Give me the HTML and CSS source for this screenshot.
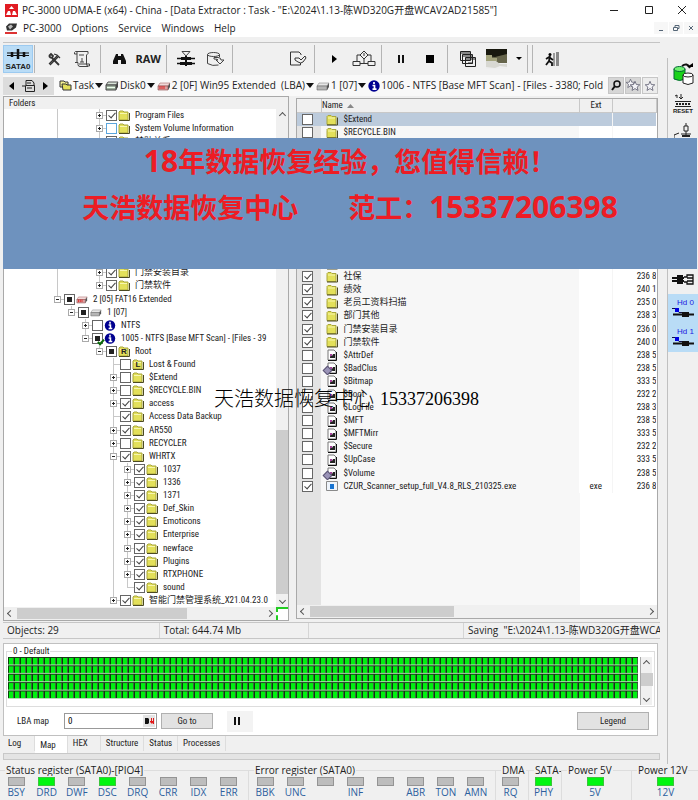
FILE: index.html
```html
<!DOCTYPE html>
<html lang="zh-CN">
<head>
<meta charset="utf-8">
<title>PC-3000 UDMA-E</title>
<link rel="stylesheet" href="styles.css">
</head>
<body>
<svg class="defs" aria-hidden="true">
  <symbol id="folder" viewBox="0 0 12 11"><path d="M1 3V2l1-1h3l1 1h4v8H1z" fill="#e3e05a" stroke="#a9a63c"/><path d="M2 3.5h7" stroke="#f7f6b0"/><path d="M1 10.5h10.500V3" fill="none" stroke="#4c4a22"/></symbol>
  <symbol id="drive" viewBox="0 0 14 10"><path d="M3 2h10l-2 3H1z" fill="#e6e6e6" stroke="#888" stroke-width=".6"/><path d="M1 5h10v4H1z" fill="#b5b5b5" stroke="#666" stroke-width=".6"/><path d="M11 5l2-3v4l-2 3z" fill="#555"/></symbol>
  <symbol id="reddrive" viewBox="0 0 14 10"><path d="M3 2h10l-2 3H1z" fill="#f0dada" stroke="#a66" stroke-width=".6"/><path d="M1 5h10v4H1z" fill="#d9a0a0" stroke="#844" stroke-width=".6"/><path d="M3 5v3M5 5v3M7 5v3" stroke="#d22"/><path d="M11 5l2-3v4l-2 3z" fill="#555"/></symbol>
  <symbol id="info" viewBox="0 0 12 12"><circle cx="6" cy="6" r="5.700" fill="#000090"/><path d="M6 2v2M4.500 5.500H6.500V9M4.500 9.200h4" stroke="#fff" stroke-width="1.700" fill="none"/></symbol>
  <symbol id="file" viewBox="0 0 12 12"><path d="M2 1h6l2 2v8H2z" fill="#fff" stroke="#777"/><path d="M10.500 3v8.500H2" fill="none" stroke="#111"/><path d="M4 8l1-3 1 2 1-2h2v4H4z" fill="#222"/><path d="M4 5h2v2H4z" fill="#a4409a"/></symbol>
  <symbol id="meta" viewBox="0 0 12 12"><use href="#file" width="12" height="12"/></symbol>
  <symbol id="exe" viewBox="0 0 12 10"><path d="M.5.5h11v9H.5z" fill="#eef4fb" stroke="#8a8a8a"/><path d="M4 3h4v5H4z" fill="#1673d1"/></symbol>
  <symbol id="star" viewBox="0 0 14 14"><path d="M7 1.500l1.600 3.800 4 .3-3.100 2.600 1 4L7 10l-3.500 2.200 1-4L1.400 5.600l4-.3z" fill="#f4f4f8" stroke="#667"/></symbol>
  <symbol id="head" viewBox="0 0 24 12"><path d="M1 1.500h4l3 4h6" fill="none" stroke="#114"/><path d="M4 1h4v4H4z" fill="#0000e0"/><path d="M2 7.500h21" stroke="#111" stroke-width="2"/><path d="M11 5h7v5h-7z" fill="#111"/></symbol>
</svg>

<div class="window">
  <header class="titlebar">
    <svg class="i13" viewBox="0 0 13 13"><path d="M0 0h13v13H0z" fill="#e11b22"/><path d="M4 5l2.500-3L9 5zM1 11l2-4h2l1 4zM7 11l1-4h2l2 4z" fill="#fff"/></svg>
    <h1>PC-3000 UDMA-E (x64) - China - [Data Extractor : Task - "E:\2024\1.13-陈WD320G开盘WCAV2AD21585"]</h1>
    <div class="winbtns">
      <button aria-label="Minimize"><svg viewBox="0 0 10 10"><path d="M1 5.500h8" stroke="#222"/></svg></button>
      <button aria-label="Maximize"><svg viewBox="0 0 10 10"><path d="M1.500 1.500h7v7h-7z" fill="none" stroke="#222"/></svg></button>
      <button aria-label="Close"><svg viewBox="0 0 10 10"><path d="M1 1l8 8M9 1L1 9" stroke="#222"/></svg></button>
    </div>
  </header>
  <nav class="menubar">
    <svg class="i13" viewBox="0 0 13 12"><path d="M1 4l3-3h8l-1 4-4 3H2z" fill="#333"/><path d="M3 4l3-2 2 2-3 3z" fill="#bbb"/><path d="M0 10.500h12" stroke="#d33" stroke-width="2"/></svg>
    <button>PC-3000</button><button>Options</button><button>Service</button><button>Windows</button><button>Help</button>
    <div class="mdi">
      <button aria-label="Minimize child"><svg viewBox="0 0 8 8"><path d="M2 6.500h4" stroke="#567"/></svg></button>
      <button aria-label="Restore child"><svg viewBox="0 0 8 8"><path d="M3 3V1.500h4v3H5.500M1.500 3.500h4v3h-4z" fill="none" stroke="#567"/></svg></button>
      <button aria-label="Close child"><svg viewBox="0 0 8 8"><path d="M2 2l4 4M6 2L2 6" stroke="#567"/></svg></button>
    </div>
  </nav>

  <div class="workspace">
    <main class="main">
      <div class="toolbar">
        <div class="group g1"><button class="on" aria-label="SATA0"><svg width="28" height="26" viewBox="0 0 28 26"><path d="M3 7h22M3 9.500h22" stroke="#111" stroke-width="1.200"/><path d="M8 6v5M14 3v10M20 6v5" stroke="#111" stroke-width="2.500"/></svg><span>SATA0</span></button></div>
        <div class="group g2">
          <button aria-label="Tools"><svg width="14" height="14" viewBox="0 0 14 14" fill="none" stroke="#333"><path d="M2 12l8-8M3 13l8-8M7 2l3 1 3 3" stroke-width="1.200"/><path d="M2 4l2-2 2 2-1 2 7 7M4 6l-2-2" stroke-width="1.800"/></svg></button>
          <button aria-label="Script"><svg width="18" height="18" viewBox="0 0 18 18" fill="none" stroke="#444"><path d="M4 4V1.500h11v2L13.500 5v9M1.500 2.500Q2 1 4 1.500M4 4H1.500V2.500M4 4v8M13.500 14q0 3 3 2v-2H6M2 12.500h3v2q0 2 2 2h8"/><path d="M6 5h5M9 8v4M7 12h4"/></svg></button>
        </div>
        <div class="group g3">
          <button aria-label="Find"><svg width="13" height="12" viewBox="0 0 13 12"><path d="M3 1h2v2h3V1h2l3 7v3H8V7H5v4H0V8z" fill="#111"/></svg></button>
          <button class="raw">RAW</button>
        </div>
        <div class="group g4">
          <button aria-label="Build map"><svg width="18" height="18" viewBox="0 0 18 18"><path d="M5 1.500h8L9 6z" fill="none" stroke="#444"/><path d="M0 8.500h18M0 13.500h18" stroke="#111" stroke-width="1.600"/><path d="M4 7h10v3H4zM3 12h12v3H3z" fill="#111"/><path d="M9 6v10" stroke="#111" stroke-width="2"/></svg></button>
          <button aria-label="Save map"><svg width="19" height="16" viewBox="0 0 19 16" fill="none" stroke="#444"><ellipse cx="7.500" cy="3.500" rx="6" ry="2"/><path d="M1.500 3.500v9q5 3 11 1.500M13.500 3.500V6M8 6.500h4q3 0 3 2.500h3l-4 4-4-4h2q0-1-4-1z"/></svg></button>
        </div>
        <div class="group g5"><button aria-label="Export"><svg width="18" height="16" viewBox="0 0 18 16" fill="none" stroke="#333"><path d="M12 4V3l-2-2H1.500v13h10v-2M6 7h4l2 2 4-4 1 2-3 4q-2 2-5 0L6 9z"/></svg></button></div>
        <div class="group g6">
          <button aria-label="Start"><svg width="6" height="10" viewBox="0 0 6 10"><path d="M0 1l5 4-5 4z"/></svg></button>
          <button aria-label="Options tree"><svg width="24" height="18" viewBox="0 0 24 18" fill="none" stroke="#333"><path d="M12 1l4 4-4 4-4-4zM12 3v3M8 5H5v6M16 5h3v6M12 9v4M1 11.500h7v4H1zM16 11.500h7v4h-7zM8 13.500h8"/></svg></button>
        </div>
        <div class="group g7">
          <button aria-label="Pause"><svg width="8" height="10" viewBox="0 0 8 10"><path d="M2 1v8M6 1v8" stroke="#111" stroke-width="2"/></svg></button>
          <button aria-label="Stop"><svg width="8" height="8" viewBox="0 0 8 8"><path d="M0 0h8v8H0z"/></svg></button>
        </div>
        <div class="group g8">
          <button aria-label="Windows"><svg width="16" height="16" viewBox="0 0 16 16" fill="#f0f0f0" stroke="#222"><path d="M.5.5h10v9H.5zM2.500 3.500h10v9h-10zM5.500 6.500h10v9h-10z"/><path d="M1 2h10M3 5h10M6 8h10"/><path d="M8 12h5"/></svg></button>
          <button aria-label="Picture"><svg width="21" height="20" viewBox="0 0 21 20"><path d="M0 0h21v20H0z" fill="#eee"/><path d="M0 0h21v8H0z" fill="#18180e"/><path d="M0 7l9 1 12-3v9H12l-3 2H0z" fill="#66654b"/><path d="M0 6h6v3h5v3H0z" fill="#a3a37c"/><path d="M0 12h10l4 3h7v3l-7-1-5 2-9-1z" fill="#d8d8d2"/></svg></button>
          <button aria-label="More"><svg width="6" height="4" viewBox="0 0 6 4"><path d="M0 0h6L3 3z"/></svg></button>
        </div>
        <div class="group g9"><button aria-label="Exit"><svg width="14" height="15" viewBox="0 0 14 15"><path d="M8 1h2v13H8z" fill="#999"/><path d="M11 0h3v14h-3z" fill="#888"/><circle cx="5" cy="2.500" r="1.500"/><path d="M5 4L4 9l3 2v3M4 9l-3 4M1 7l3-2 4 3" fill="none" stroke="#111" stroke-width="1.800"/></svg></button></div>
      </div>

      <div class="pathbar">
        <div class="nav">
          <button aria-label="Back"><svg width="6" height="8" viewBox="0 0 6 8"><path d="M5 0v8L0 4z"/></svg></button>
          <button aria-label="History"><svg width="13" height="12" viewBox="0 0 13 12" fill="none" stroke="#222"><path d="M0 6h3M4 5V.500h6L12 3v3M3.500 5.500h9v6h-9zM5 8h5M5 3h4"/></svg></button>
          <button aria-label="Forward"><svg width="6" height="8" viewBox="0 0 6 8"><path d="M0 0v8l5-4z"/></svg></button>
        </div>
        <div class="crumbs">
          <button><svg width="13" height="11" viewBox="0 0 13 11"><path d="M1 1h4l1 1h3v5H1z" fill="#f0ee90" stroke="#333"/><path d="M3 4h4l1 1h4v5H4z" fill="#e3e05a" stroke="#333"/></svg>Task<i></i></button>
          <button><svg width="14" height="10" viewBox="0 0 14 10"><path d="M3 1h10l-2 3H1z" fill="#d8e4d8" stroke="#555"/><path d="M1 4h10v5H1z" fill="#9eb09e" stroke="#444"/><path d="M11 4l2-3v5l-2 3z" fill="#444"/><path d="M2 6.500h8" stroke="#efe"/></svg>Disk0<i></i></button>
          <button><svg width="14" height="10"><use href="#reddrive"/></svg>2 [0F] Win95 Extended &nbsp;(LBA)<i></i></button>
          <button><svg width="14" height="10"><use href="#drive"/></svg>1 [07]<i></i></button>
          <button><svg width="12" height="12"><use href="#info"/></svg>1006 - NTFS [Base MFT Scan] - [Files - 3380; Fold</button>
        </div>
        <div class="find">
          <button aria-label="Search"><svg width="10" height="11" viewBox="0 0 10 11"><circle cx="6" cy="4" r="3" fill="none" stroke="#111" stroke-width="1.500"/><path d="M4 6l-3 4" stroke="#111" stroke-width="2"/></svg></button>
          <button aria-label="Bookmarks"><svg width="15" height="13"><use href="#star" x="-1" y="-1" width="11" height="11"/><use href="#star" x="3" y="1" width="12" height="12"/></svg></button>
          <button aria-label="Add bookmark" class="light"><svg width="12" height="12"><use href="#star"/></svg></button>
        </div>
      </div>

      <div class="panes">
        <section class="folders">
          <h2>Folders</h2>
          <div class="treewrap">
            <div class="tree" id="tree"></div>
            <div class="vbar"><b class="up"></b><span class="thumb"></span><b class="down"></b></div>
          </div>
          <div class="hbar"><b class="left"></b><span class="track"><span class="thumb"></span></span><b class="right"></b><span class="corner"></span></div>
        </section>
        <section class="files">
          <div class="filebody">
            <table>
              <colgroup><col class="c1"><col><col class="c3"><col class="c4"></colgroup>
              <thead><tr><th></th><th class="name">Name <svg width="7" height="4" viewBox="0 0 7 4"><path d="M3.500 0L7 4H0z" fill="#888"/></svg></th><th class="ext">Ext</th><th></th></tr></thead>
              <tbody id="files"></tbody>
            </table>
            <div class="rest"><span></span><span></span></div>
          </div>
          <div class="hbar"><b class="left"></b><span class="track"><span class="thumb"></span></span><b class="right"></b></div>
        </section>
      </div>

      <div class="statusbar"><span>Objects: 29</span><span>Total: 644.74 Mb</span><span></span><span>Saving &nbsp;"E:\2024\1.13-陈WD320G开盘WCA</span></div>

      <section class="map">
        <fieldset>
          <legend>0 - Default</legend>
          <div class="blocks"></div>
          <div class="vbar"><b class="up"></b><span class="thumb"></span><b class="down"></b></div>
        </fieldset>
        <div class="lba">
          <label for="lba">LBA map</label>
          <span class="field"><input id="lba" type="text" value="0"><button aria-label="Base"><svg width="9" height="6" viewBox="0 0 9 6"><path d="M0 0h3l1 1v4L3 6H0z" fill="#111"/><path d="M5 3h1V0h1v3h2L7 6 5 4zM8 0h1v6H8z" fill="#e01818"/></svg></button></span>
          <button class="btn">Go to</button>
          <button class="pause" aria-label="Pause map"><svg width="8" height="10" viewBox="0 0 8 10"><path d="M2 1v8M6 1v8" stroke="#111" stroke-width="2"/></svg></button>
          <button class="btn legend">Legend</button>
        </div>
      </section>
      <div class="tabs"><button>Log</button><button class="active">Map</button><button>HEX</button><button>Structure</button><button>Status</button><button>Processes</button></div>
      <div class="strip"></div>
    </main>

    <aside class="side">
      <button aria-label="Copy disk"><svg width="21" height="24" viewBox="0 0 21 24"><path d="M1 7v10q6 3 11 0V7" fill="#19d219" stroke="#063"/><ellipse cx="6.500" cy="7" rx="5.500" ry="2.500" fill="#6ff06f" stroke="#063"/><path d="M10 13v8q5 3 10 0v-8" fill="#fff" stroke="#222"/><ellipse cx="15" cy="13" rx="5" ry="2" fill="#fff" stroke="#222"/><path d="M9 4q5-4 8 2" fill="none" stroke="#111" stroke-width="2"/><path d="M14 5h6V1z"/></svg></button>
      <button aria-label="Reset"><svg width="18" height="14" viewBox="0 0 18 14"><path d="M3 4V1L1 2M7 0v5M5 3l2 2 2-2M1 7.500h16M1 12.500h16" fill="none" stroke="#222"/><path d="M2 10h14" stroke="#222" stroke-width="2" stroke-dasharray="2 1"/></svg><span>RESET</span></button>
      <button aria-label="Power"><svg width="18" height="18" viewBox="0 0 18 18" fill="none" stroke="#222"><path d="M12 0v3M10 3h4v5h-4zM12 8v5M7 11h10M0 17v-5l5-2"/><path d="M8 13h8" stroke-width="2"/></svg></button>
      <button aria-label="Connector" class="conn"><svg width="22" height="11" viewBox="0 0 22 11"><path d="M0 4h12M0 7h12" stroke="#111" stroke-width="2"/><path d="M5 1h6v9H5z" fill="#111"/><path d="M12 3h3V1h6v9h-6V8h-3M15 4h6M15 7h6" fill="none" stroke="#111" stroke-width="1.300"/></svg></button>
      <button class="hd"><span>Hd 0</span><svg width="24" height="12"><use href="#head"/></svg></button>
      <button class="hd"><span>Hd 1</span><svg width="24" height="12"><use href="#head"/></svg></button>
    </aside>
  </div>

  <footer class="registers" id="registers"></footer>

  <div class="banner">
    <p><span><em>18</em>年数据恢复经验，您值得信赖！</span></p>
    <p><span>天浩数据恢复中心</span><span>范工：<em>15337206398</em></span></p>
  </div>
  <div class="watermark">天浩数据恢复中心<span>15337206398</span></div>
</div>
<script src="app.js"></script>
</body>
</html>
```
FILE: styles.css
```css
* { box-sizing: border-box; }
body { margin: 0; background: #f0f0f0; color: #222; font: 10px/13px "Open Sans", "Noto Sans CJK SC", sans-serif; }
button { border: 0; padding: 0; margin: 0; background: none; font: inherit; color: inherit; display: flex; align-items: center; justify-content: center; }
svg { display: block; flex: none; }
.defs { position: absolute; width: 0; height: 0; }
.window { position: relative; height: 100vh; min-height: 800px; display: flex; flex-direction: column; overflow: hidden; }

.titlebar, .menubar { display: flex; align-items: center; background: #fff; padding-left: 5px; flex: none; white-space: nowrap; }
.titlebar { height: 20px; gap: 4px; }
.titlebar h1 { margin: 0; font: inherit; flex: 1; }
.i13 { width: 13px; height: 13px; }
.winbtns { display: flex; margin-left: auto; }
.winbtns button { width: 35px; height: 20px; }
.winbtns svg { width: 10px; height: 10px; }
.winbtns button:last-child { width: 32px; }
.menubar { height: 17px; gap: 10px; padding-bottom: 1px; }
.menubar .i13 { margin-right: -5px; }
.mdi { display: flex; gap: 1px; margin-left: auto; }
.mdi button { width: 14px; height: 12px; background: #f7f7f7; }
.mdi svg { width: 8px; height: 8px; }

.workspace { display: flex; flex: 1; min-height: 0; }
.main { flex: 1; min-width: 0; display: flex; flex-direction: column; padding: 5px 0 0 3px; }
.toolbar { display: flex; height: 33px; border-top: 1px solid #c4c4c4; padding-top: 2px; flex: none; margin-right: 7px; }
.group { display: flex; align-items: center; justify-content: space-between; border-right: 1px solid #b4b4b4; height: 28px; }
.g1 { width: 32px; }
.g2, .g3, .g4, .g7 { width: 66px; }
.g2 { padding: 0 9px 0 12px; }
.g3 { padding: 0 5px 0 12px; }
.g4 { padding: 0 7px 0 10px; }
.g5 { width: 82px; justify-content: flex-end; padding-right: 7px; }
.g6 { width: 67px; padding: 0 5px 0 17px; }
.g7 { padding: 0 13px 0 15px; }
.g8 { width: 80px; padding: 0 5px 0 12px; }
.g9 { width: 42px; border-left: 1px solid #b4b4b4; border-right: 0; margin-left: 4px; padding-left: 12px; }
.on { position: relative; width: 30px; height: 28px; background: #b9dcf6; border: 1px solid #9ccaf0; }
.on span { position: absolute; bottom: 1px; left: 0; right: 0; font: bold 8px/9px "Liberation Sans", sans-serif; }
.raw { font: bold 11px/14px "Open Sans", sans-serif; }

.pathbar { display: flex; align-items: center; height: 21px; flex: none; background: #f9f9f9; margin-right: 9px; }
.nav { display: flex; background: #dcdcdc; margin-right: 5px; height: 18px; }
.nav button { width: 17px; }
.crumbs { display: flex; gap: 2px; flex: 1; min-width: 0; overflow: hidden; white-space: nowrap; }
.crumbs button { gap: 1px; flex: none; }
.crumbs i { border: 4px solid transparent; border-top: 5px solid #111; border-bottom: 0; }
.find { display: flex; gap: 1px; }
.find button { width: 16px; height: 17px; background: #d6d6d6; border: 1px solid #c6c6c6; }
.find .light { background: #ececec; }

.panes { flex: 1; min-height: 0; display: grid; grid-template-columns: 286fr 361fr; column-gap: 7px; padding: 0 9px 1px 0; font: 9px/13px "Roboto Condensed", Roboto, "Noto Sans CJK SC", sans-serif; }
.folders, .files { display: flex; flex-direction: column; min-width: 0; min-height: 0; background: #fff; border: 1px solid #a9a9a9; }
.files { margin: 2px 0; }
.folders h2 { margin: 0; font: inherit; height: 12px; line-height: 13px; padding-left: 5px; background: #f0f0f0; flex: none; }
.treewrap { flex: 1; min-height: 0; display: flex; }
.tree { flex: 1; min-width: 0; display: grid; grid-auto-rows: 1fr; overflow: hidden; padding-left: 46px; }
.row { display: flex; align-items: center; white-space: nowrap; min-height: 0; }
.guide { width: 14px; height: 100%; flex: none; }
.guide.line { background: linear-gradient(#c8c8c8, #c8c8c8) 7px 0 / 1px 100% no-repeat; }
.node { width: 14px; height: 100%; flex: none; display: flex; align-items: center; justify-content: center; background: linear-gradient(#c8c8c8, #c8c8c8) 7px 50% / 7px 1px no-repeat, linear-gradient(#c8c8c8, #c8c8c8) 7px 0 / 1px 100% no-repeat; }
.node.end { background-size: 7px 1px, 1px 50%; }
.node button { width: 7px; height: 7px; background: #fff; border: 1px solid #aaa; position: relative; }
.node button::before, .node button.plus::after { content: ""; position: absolute; left: 1px; top: 2px; width: 3px; height: 1px; background: #222; }
.node button.plus::after { left: 2px; top: 1px; width: 1px; height: 3px; }
input[type=checkbox] { appearance: none; width: 11px; height: 11px; margin: 0; border: 1px solid #666; background: #fff; display: block; flex: none; position: relative; }
input[type=checkbox]:checked::after { content: ""; position: absolute; left: 3px; top: 0; width: 3px; height: 6px; border: solid #444; border-width: 0 1px 1px 0; transform: rotate(42deg); }
input.part::after { content: ""; position: absolute; left: 2px; top: 2px; width: 5px; height: 5px; background: #222; }
input.go::before { content: ""; position: absolute; left: 6px; top: 4px; width: 2px; height: 5px; border: solid #0a6a0a; border-width: 0 2px 2px 0; transform: rotate(42deg); z-index: 1; }
input[type=checkbox].blue { border-color: #5aa5dd; }
.row .ico { position: relative; width: 12px; margin: 0 5px 0 1px; }
.ico b { position: absolute; inset: 0; font: bold 8px/12px "Liberation Sans", sans-serif; text-align: center; }

.vbar { width: 12px; background: #f0f0f0; display: flex; flex-direction: column; align-items: center; flex: none; }
.vbar b, .hbar b { width: 5px; height: 5px; border: solid #555; border-width: 1px 0 0 1px; flex: none; margin: 4px; }
.up { transform: rotate(45deg); }
.down { transform: rotate(225deg); }
.left { transform: rotate(-45deg); }
.right { transform: rotate(135deg); }
.vbar .thumb { width: 12px; background: #cdcdcd; }
.tree + .vbar .thumb { margin-top: auto; flex: 0 0 33%; }
.hbar { display: flex; align-items: center; height: 13px; background: #f0f0f0; flex: none; }
.hbar .track { flex: 1; height: 11px; }
.hbar .thumb { display: block; width: 69%; height: 11px; background: #cdcdcd; }
.files .hbar .thumb { width: 43%; }
.corner { width: 12px; height: 13px; border: 2px dashed #2c2; border-width: 2px 0 0 2px; background: #fff; }

.filebody { flex: 1; min-height: 0; display: flex; flex-direction: column; overflow: hidden; background: #fff; }
table { width: 100%; height: 394px; flex: none; border-collapse: collapse; table-layout: fixed; }
.c1 { width: 24px; } .c3 { width: 33px; } .c4 { width: 44px; }
th, td { padding: 0; font-weight: normal; white-space: nowrap; overflow: hidden; }
th { background: #f0f0f0; border-right: 1px solid #c8c8c8; border-bottom: 1px solid #c8c8c8; text-align: left; height: 13px; }
th.name svg { display: inline-block; margin-left: 2px; }
th.ext, td:nth-child(3) { text-align: center; }
td:nth-child(1) { background: #e3e3e3; }
td:nth-child(1) input { margin-left: 5px; }
td:nth-child(2) { background: #f7f7f7; }
td:nth-child(4) { text-align: right; border-left: 1px solid #f5f5f5; }
tr.sel td { background: #bccbdc; }
.name2 { display: flex; align-items: center; gap: 5px; padding-left: 5px; height: 13px; position: relative; }
.meta::before { content: ""; position: absolute; left: 3px; top: 5px; width: 5px; height: 5px; background: #9a93b8; border: 1px solid #5c5674; transform: rotate(45deg); }
.rest { flex: 1; display: flex; padding-right: 77px; }
.rest span:first-child { width: 24px; background: #e3e3e3; }
.rest span:last-child { flex: 1; background: #f7f7f7; }

.statusbar { display: grid; grid-template-columns: 156fr 149fr 154fr 195fr; height: 17px; flex: none; border: solid #c6c6c6; border-width: 1px 0; margin: 0 7px 4px 0; line-height: 15px; }
.statusbar span { padding-left: 4px; white-space: nowrap; overflow: hidden; border-right: 1px solid #d5d5d5; }
.statusbar span:last-child { border-right: 0; }
.map { flex: none; background: #fff; border: 1px solid #c0c0c0; margin-right: 9px; padding: 1px 2px 0; font: 9px/12px "Roboto Condensed", Roboto, sans-serif; }
fieldset { border: 1px solid #ddd; margin: 0; padding: 0; min-width: 0; display: flex; }
.map fieldset { height: 62px; padding: 0 2px 5px 1px; }
legend { margin-left: 4px; padding: 0 1px; }
.blocks { flex: 1; height: 42px; margin-right: 2px; background: linear-gradient(#123c12 0 1px, #0000 1px 7px, #b8e0b8 7px) 0 0 / 6px 20%, linear-gradient(90deg, #0b3d0b 0 1px, #00f010 1px 5px, #3f663f 5px) 0 0 / 6px 20%; }
.map .vbar { height: 48px; border-left: 1px solid #aaa; }
.map .vbar .thumb { height: 13px; margin: 3px 0 auto; }
.lba { display: flex; align-items: center; height: 28px; padding-left: 11px; }
.lba label { width: 47px; }
.field { display: flex; width: 93px; height: 16px; border: 1px solid #999; align-items: center; }
.field input { border: 0; padding: 0 3px; flex: 1; min-width: 0; font: inherit; outline: 0; background: #fff; }
.field button { width: 12px; height: 12px; background: #e4e4e4; margin-right: 1px; }
.btn { height: 16px; width: 52px; margin-left: 4px; background: #e2e2e2; border: 1px solid #b0b0b0; }
.pause { width: 26px; height: 21px; background: #f3f3f3; margin-left: 14px; padding-right: 7px; }
.legend { width: 72px; height: 18px; margin: 0 6px 0 auto; }
.tabs { display: flex; height: 17px; flex: none; font: 9px/13px "Roboto Condensed", Roboto, sans-serif; }
.tabs button { padding: 0 5px; border-right: 1px solid #ddd; height: 15px; }
.tabs button:first-child { padding-right: 13px; }
.tabs .active { background: #fff; height: 17px; padding: 2px 11px 0 5px; }
.tabs button:nth-child(3) { padding-right: 12px; }
.strip { height: 7px; flex: none; background: #e4e4e4; border: 1px solid #c8c8c8; margin: 0 7px 4px 0; }

.side { width: 31px; flex: none; margin-top: 21px; border-left: 1px solid #c0c0c0; display: flex; flex-direction: column; align-items: center; }
.side button { flex-direction: column; width: 100%; flex: none; }
.side button:nth-child(1) { height: 32px; }
.side button:nth-child(2) { height: 29px; }
.side button:nth-child(3) { height: 26px; }
.side span { font: bold 6px/7px "Liberation Sans", sans-serif; }
.side .conn { margin-top: 120px; height: 29px; }
.side .hd { background: #b9dcf6; height: 29px; }
.side .hd span { color: #1a1ae0; font: 8px/9px "Liberation Sans", sans-serif; align-self: flex-end; margin-right: 4px; }

.registers { display: grid; grid-template-columns: 249fr 247fr 33fr 33fr 70fr 66fr; height: 36px; flex: none; }
.registers fieldset { padding: 0 4px 0 1px; border-width: 1px 1px 0 0; white-space: nowrap; line-height: 12px; }
.registers fieldset:last-child { padding-right: 0; border-right: 0; }
.registers legend { margin-left: 4px; max-width: 100%; overflow: hidden; }
.lamp { flex: 1; display: flex; flex-direction: column; align-items: center; color: #2d5f9e; padding-top: 1px; line-height: 13px; }
.lamp i { width: 17px; height: 9px; background: #bdbdbd; border: 1px solid #949494; }
.lamp.lit i { background: #00f610; border-color: #3bc43b; }

.banner { position: absolute; left: 3px; right: 1px; top: 138px; height: 131px; background: #6e92be; color: #ed1c24; font: bold 27px/46px "Noto Sans CJK SC", sans-serif; }
.banner p { margin: 0; display: flex; justify-content: center; gap: 50px; white-space: nowrap; }
.banner em { font: bold 30px/46px "Open Sans", sans-serif; }
.watermark { position: absolute; left: 214px; top: 385px; display: flex; gap: 6px; color: #000; font: 300 20px/26px "Noto Sans CJK SC", sans-serif; white-space: nowrap; }
.watermark span { font: 18px/28px "Liberation Serif", serif; }
```
FILE: app.js
```js
// [level, check state, icon, label, expander]
const tree = [
  [3, "on", "folder", "Program Files", "plus"],
  [3, "blue", "folder", "System Volume Information", "plus"],
  [3, "on", "folder", "禁贴关系", "plus"],
  ...Array(9).fill([3, "on", "folder", "", "plus"]),
  [3, "on", "folder", "门禁安装目录", "plus"],
  [3, "on", "folder", "门禁软件", "plus"],
  [0, "part", "reddrive", "2 [05] FAT16 Extended", "minus"],
  [1, "part", "drive", "1 [07]", "minus"],
  [2, "", "info", "NTFS", "plus"],
  [2, "part go", "info", "1005 - NTFS [Base MFT Scan] - [Files - 39", "minus"],
  [3, "part", "folder:R", "Root", "minus"],
  [4, "", "folder:L", "Lost & Found", ""],
  [4, "", "folder", "$Extend", "plus"],
  [4, "", "folder", "$RECYCLE.BIN", "plus"],
  [4, "on", "folder", "access", "plus"],
  [4, "on", "folder", "Access Data Backup", ""],
  [4, "on", "folder", "AR550", "plus"],
  [4, "", "folder", "RECYCLER", "plus"],
  [4, "on", "folder", "WHRTX", "minus"],
  ...["1037", "1336", "1371", "Def_Skin", "Emoticons", "Enterprise", "newface", "Plugins", "RTXPHONE"].map(n => [5, "on", "folder", n, "plus"]),
  [5, "on", "folder", "sound", ""],
  [4, "on", "folder", "智能门禁管理系统_X21.04.23.0", "plus"]
];

// A column carries a line while a later sibling exists at that level.
function continues(index, level) {
  const next = tree.slice(index + 1).find(r => r[0] <= level);
  return Boolean(next) && next[0] === level;
}
const check = (state, label) =>
  `<input type="checkbox" class="${state}" aria-label="${label || "item"}"${state === "on" ? " checked" : ""}>`;

document.getElementById("tree").innerHTML = tree.map(([level, state, icon, label, exp], i) => {
  const [id, letter] = icon.split(":");
  let guides = "";
  for (let k = 0; k < level; k++) guides += `<span class="guide${continues(i, k) ? " line" : ""}"></span>`;
  const node = `<span class="node${continues(i, level) ? "" : " end"}">${exp ? `<button class="${exp}" aria-label="Toggle"></button>` : ""}</span>`;
  return `<div class="row">${guides}${node}${check(state, label)}<span class="ico"><svg width="12" height="11"><use href="#${id}"/></svg>${letter ? `<b>${letter}</b>` : ""}</span>${label.replace("&", "&amp;")}</div>`;
}).join("");

const files = [
  ["", "folder", "$Extend", ""], ["", "folder", "$RECYCLE.BIN", ""],
  ...Array(10).fill(["on", "folder", "", ""]),
  ["on", "folder", "社保", "236 8"], ["on", "folder", "绩效", "240 1"],
  ["on", "folder", "老员工资料扫描", "235 0"], ["on", "folder", "部门其他", "238 3"],
  ["on", "folder", "门禁安装目录", "236 0"], ["on", "folder", "门禁软件", "240 0"],
  ["", "file", "$AttrDef", "238 5"], ["", "meta", "$BadClus", "238 5"],
  ["", "file", "$Bitmap", "333 5"], ["", "file", "$Boot", "232 2"],
  ["", "file", "$LogFile", "238 3"], ["", "file", "$MFT", "238 5"],
  ["", "file", "$MFTMirr", "333 5"], ["", "file", "$Secure", "232 2"],
  ["", "file", "$UpCase", "333 5"], ["", "meta", "$Volume", "238 5"],
  ["on", "exe", "CZUR_Scanner_setup_full_V4.8_RLS_210325.exe", "236 8", "exe"]
];
document.getElementById("files").innerHTML = files.map(([state, icon, name, size, ext], i) =>
  `<tr${i ? "" : ' class="sel"'}><td>${check(state, name)}</td><td><div class="name2 ${icon}"><svg width="12" height="12"><use href="#${icon}"/></svg>${name}</div></td><td>${ext || ""}</td><td>${size}</td></tr>`
).join("");

const registers = [
  ["Status register (SATA0)-[PIO4]", ["BSY", "DRD*", "DWF", "DSC*", "DRQ", "CRR", "IDX", "ERR"]],
  ["Error register (SATA0)", ["BBK", "UNC", "", "INF", "", "ABR", "TON", "AMN"]],
  ["DMA", ["RQ"]], ["SATA-", ["PHY*"]], ["Power 5V", ["5V*"]], ["Power 12V", ["12V*"]]
];
document.getElementById("registers").innerHTML = registers.map(([title, lamps]) =>
  `<fieldset><legend>${title}</legend>${lamps.map(l =>
    `<span class="lamp${l.endsWith("*") ? " lit" : ""}"><i></i>${l.replace("*", "")}</span>`).join("")}</fieldset>`
).join("");
```
